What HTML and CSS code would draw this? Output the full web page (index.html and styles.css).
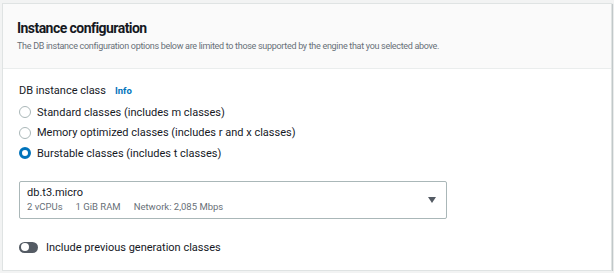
FILE: index.html
```html
<!DOCTYPE html>
<html>
<head>
<meta charset="utf-8">
<link rel="stylesheet" href="styles.css">
</head>
<body>
<div class="panel">
  <div class="panel-header">
    <h2 class="title">Instance configuration</h2>
    <p class="desc">The DB instance configuration options below are limited to those supported by the engine that you selected above.</p>
  </div>
  <div class="panel-body">
    <div class="label-row"><span class="label">DB instance class</span><a class="info">Info</a></div>
    <div class="radios">
      <label class="radio"><span class="dot"></span><span>Standard classes (includes m classes)</span></label>
      <label class="radio"><span class="dot"></span><span>Memory optimized classes (includes r and x classes)</span></label>
      <label class="radio"><span class="dot checked"></span><span>Burstable classes (includes t classes)</span></label>
    </div>
    <div class="select">
      <div class="select-text">
        <div class="select-main">db.t3.micro</div>
        <div class="select-tags"><span>2 vCPUs</span><span>1 GiB RAM</span><span>Network: 2,085 Mbps</span></div>
      </div>
      <span class="caret"></span>
    </div>
    <label class="toggle-row"><span class="toggle"><span class="knob"></span></span><span>Include previous generation classes</span></label>
  </div>
</div>
</body>
</html>
```

FILE: styles.css
```css
* { box-sizing: border-box; }
html, body { margin: 0; }
body {
  background: #f2f3f3;
  padding: 3px 2px 0 2px;
  font-family: Roboto, "Liberation Sans", sans-serif;
  color: #16191f;
}
.panel {
  width: 610px;
  height: 268px;
  background: #fff;
  border: 1px solid #dfe3e3;
  box-shadow: 1px 1px 1px rgba(0, 28, 36, 0.2);
}
.panel-header {
  background: #fafafa;
  border-bottom: 1px solid #eaeded;
  height: 65px;
  padding: 15px 14px 0 14px;
}
.title {
  margin: 0;
  font-size: 14px;
  font-weight: 700;
  line-height: 18px;
  letter-spacing: -0.55px;
}
.desc {
  margin: 3px 0 0 0;
  font-size: 9px;
  line-height: 12px;
  letter-spacing: -0.3px;
  color: #687078;
}
.panel-body {
  padding: 14px 16px 0 16px;
}
.label-row {
  display: flex;
  align-items: baseline;
  gap: 9px;
  font-size: 11px;
  line-height: 16px;
}
.info {
  color: #0073bb;
  font-weight: 700;
  font-size: 9.5px;
}
.radios {
  display: flex;
  flex-direction: column;
  margin-top: 3px;
}
.radio {
  display: flex;
  align-items: center;
  gap: 6px;
  height: 20.5px;
  font-size: 11px;
}
.dot {
  width: 12px;
  height: 12px;
  border-radius: 50%;
  border: 1px solid #aab7b8;
  background: #fff;
  flex: none;
}
.dot.checked {
  border: 3.5px solid #0073bb;
}
.select {
  margin-top: 17px;
  width: 428px;
  height: 38px;
  border: 1px solid #aab7b8;
  border-radius: 2px;
  display: flex;
  align-items: center;
  justify-content: space-between;
  padding: 0 10px 0 7px;
}
.select-main {
  font-size: 11px;
  line-height: 15px;
}
.select-tags {
  display: flex;
  gap: 13px;
  font-size: 9.5px;
  line-height: 14px;
  color: #687078;
}
.caret {
  width: 0;
  height: 0;
  border-left: 4px solid transparent;
  border-right: 4px solid transparent;
  border-top: 6px solid #545b64;
}
.toggle-row {
  display: flex;
  align-items: center;
  gap: 8px;
  margin-top: 22px;
  font-size: 11px;
}
.toggle {
  width: 19px;
  height: 11px;
  border-radius: 6px;
  background: #545b64;
  display: flex;
  align-items: center;
  padding: 0 1.5px;
  flex: none;
}
.knob {
  width: 8px;
  height: 8px;
  border-radius: 50%;
  background: #fff;
}
```
